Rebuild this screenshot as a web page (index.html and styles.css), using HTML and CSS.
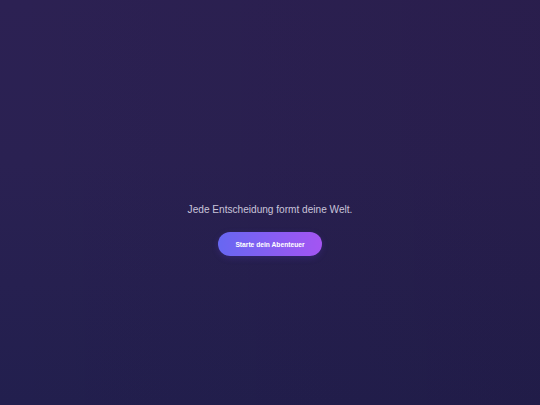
FILE: index.html
```html
<!DOCTYPE html>
<html lang="de">
<head>
<meta charset="utf-8">
<title>Abenteuer</title>
<link rel="stylesheet" href="styles.css">
</head>
<body>
<main class="intro">
  <p class="tagline">Jede Entscheidung formt deine Welt.</p>
  <button class="start-btn">Starte dein Abenteuer</button>
</main>
</body>
</html>
```
FILE: styles.css
```css
html, body {
  margin: 0;
  padding: 0;
  height: 100%;
}
body {
  font-family: "Liberation Sans", Arial, sans-serif;
  background:
    linear-gradient(to right, rgba(20, 0, 20, 0) 0%, rgba(20, 0, 20, 0.1) 100%),
    linear-gradient(to bottom, #2c2153 0%, #2a2152 40%, #221f4e 100%);
  overflow: hidden;
}
.intro {
  box-sizing: border-box;
  height: 100%;
  padding-top: 204px;
  display: flex;
  flex-direction: column;
  align-items: center;
}
.tagline {
  margin: 0;
  font-size: 10.1px;
  line-height: 12px;
  color: #c9c4da;
}
.start-btn {
  margin-top: 16px;
  height: 24px;
  padding: 0 17px;
  border: none;
  border-radius: 12px;
  background: linear-gradient(to right, #6767f2, #a455f2);
  color: #ffffff;
  font-family: "Liberation Sans", Arial, sans-serif;
  font-weight: bold;
  font-size: 6.7px;
  cursor: pointer;
  box-shadow: 0 2px 6px rgba(90, 60, 200, 0.25);
}
```
